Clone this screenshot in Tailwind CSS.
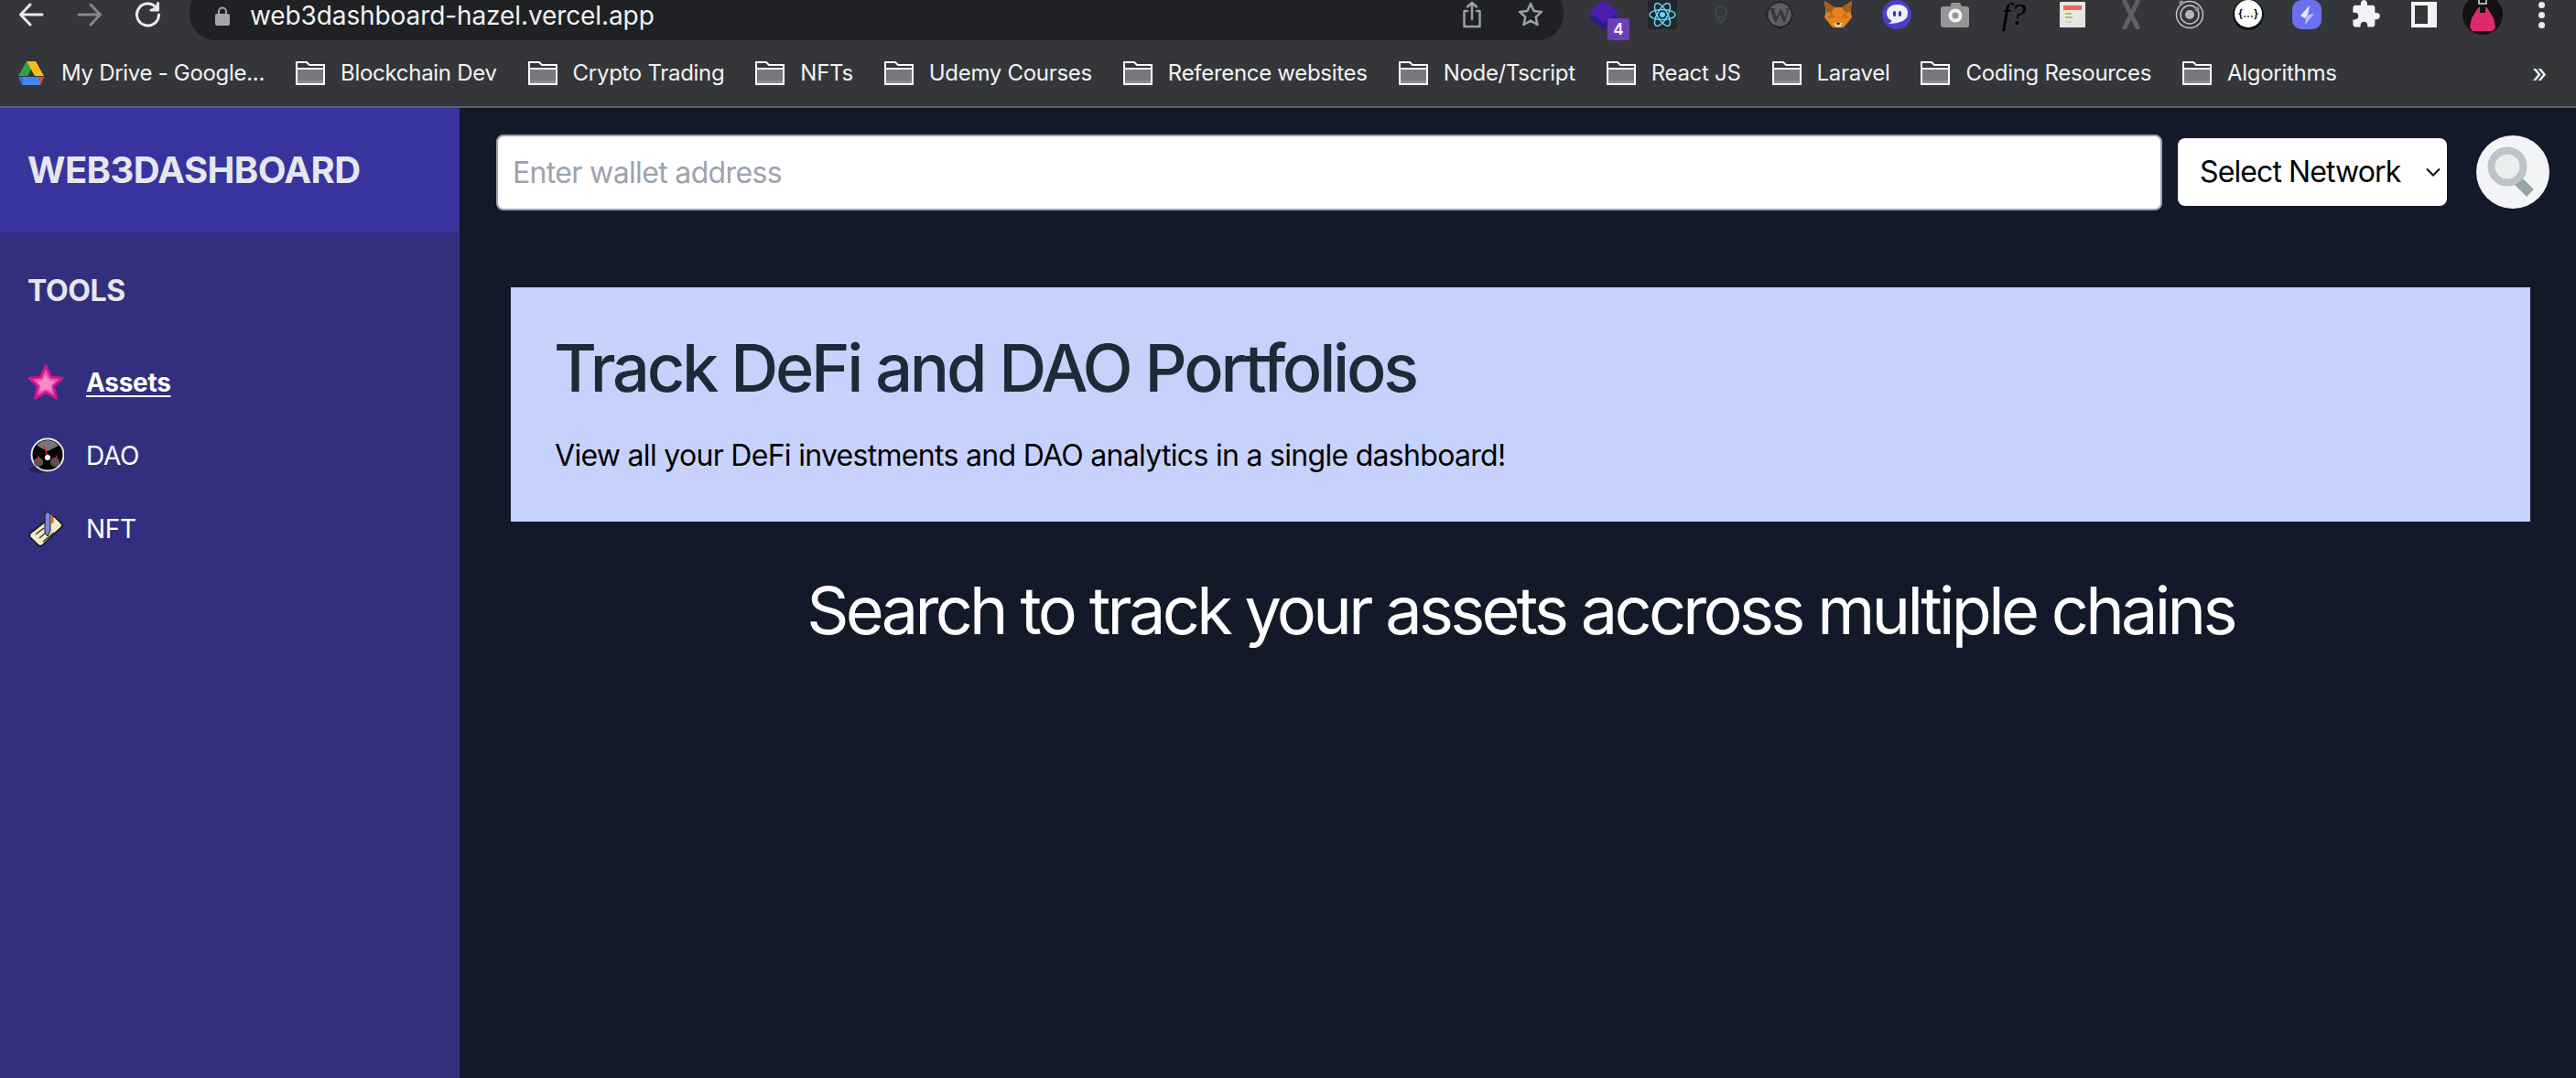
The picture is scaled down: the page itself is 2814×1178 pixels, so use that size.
<!DOCTYPE html>
<html lang="en">
<head>
<meta charset="UTF-8">
<title>Web3Dashboard</title>
<script src="https://cdn.jsdelivr.net/npm/@tailwindcss/browser@4"></script>
</head>
<body class="h-screen overflow-hidden bg-[#121a2a] font-['Inter',sans-serif]">
<div class="flex flex-col h-screen">

  <!-- browser chrome -->
  <div class="h-[118px] flex-none bg-[#35363a] border-b-2 border-[#5f6064] overflow-hidden">
    <div class="h-[44px] flex items-start pl-[2px]">
      <div class="w-[64px] h-[32px] flex items-center justify-center">
        <svg width="28" height="26" viewBox="0 0 28 26" fill="none" stroke="#e8eaed" stroke-width="3" stroke-linecap="round" stroke-linejoin="round"><path d="M26 13H3M13 2 2.500 13 13 24"/></svg>
      </div>
      <div class="w-[64px] h-[32px] flex items-center justify-center">
        <svg width="28" height="26" viewBox="0 0 28 26" fill="none" stroke="#85878a" stroke-width="3" stroke-linecap="round" stroke-linejoin="round"><path d="M2 13h23M15 2l10.500 11L15 24"/></svg>
      </div>
      <div class="w-[64px] h-[32px] flex items-center justify-center">
        <svg width="30" height="28" viewBox="0 0 30 28" fill="none" stroke="#e8eaed" stroke-width="3" stroke-linecap="round" stroke-linejoin="round"><path d="M23 5.500A12 12 0 1 0 26.500 14"/><path d="M25.500 1.500v7.500H18" fill="#e8eaed"/></svg>
      </div>
      <div class="ml-[13px] w-[1501px] h-[44px] flex-none rounded-b-[28px] rounded-tl-[5px_16px] rounded-tr-[5px_16px] bg-[#202124] flex items-start pl-[28px] pr-[22px]">
        <svg class="mt-[7px]" width="16" height="21" viewBox="0 0 16 21"><path d="M4 9V5.500a4 4 0 0 1 8 0V9" fill="none" stroke="#a3a6ab" stroke-width="2"/><rect y="8" width="16" height="13" rx="2" fill="#a3a6ab"/></svg>
        <span class="ml-[22px] text-[28px] leading-[34px] text-[#f1f3f4] tracking-[-0.1px]">web3dashboard-hazel.vercel.app</span>
        <svg class="ml-auto mt-[1px]" width="24" height="30" viewBox="0 0 24 30" fill="none" stroke="#9aa0a6" stroke-width="2.500" stroke-linecap="round" stroke-linejoin="round"><path d="M7 11H3.500v17h17V11H17M12 20V2M7 6.500 12 2l5 4.500"/></svg>
        <svg class="ml-[38px] mt-[2px]" width="28" height="28" viewBox="0 0 28 28" fill="none" stroke="#9aa0a6" stroke-width="2.500" stroke-linejoin="round"><path d="m14 2 3.600 8 8.400 .9-6.300 5.700 1.800 8.400L14 20.700 6.500 25l1.800-8.400L2 10.900l8.400-.9z"/></svg>
      </div>
      <!-- extension icons -->
      <div class="ml-[12px] flex items-start">
        <div class="w-[64px] h-[32px] flex justify-center relative">
          <svg width="32" height="32" viewBox="0 0 32 32"><path d="M16 8 32 20 16 32 0 20z" fill="#2d1a8a"/><path d="M16 0 32 13 16 25 0 13z" fill="#4a1fb0"/></svg>
          <span class="absolute left-[36px] top-[20px] w-[24px] h-[24px] rounded-[3px] bg-[#6a3fb8] text-white text-[17px] leading-[24px] font-semibold text-center">4</span>
        </div>
        <div class="w-[64px] h-[32px] flex justify-center">
          <svg width="32" height="32" viewBox="0 0 32 32"><rect width="32" height="32" rx="2" fill="#23272b"/><g fill="none" stroke="#61dafb" stroke-width="1.500"><ellipse cx="16" cy="16" rx="14" ry="5.500"/><ellipse cx="16" cy="16" rx="14" ry="5.500" transform="rotate(60 16 16)"/><ellipse cx="16" cy="16" rx="14" ry="5.500" transform="rotate(120 16 16)"/></g><circle cx="16" cy="16" r="3" fill="#61dafb"/></svg>
        </div>
        <div class="w-[64px] h-[32px] flex justify-center items-center">
          <svg width="16" height="22" viewBox="0 0 16 22" fill="none" stroke="#3f4c4b" stroke-width="1.500"><circle cx="8" cy="8" r="6"/><path d="M3 14l5 6 5-6"/></svg>
        </div>
        <div class="w-[64px] h-[32px] flex justify-center relative">
          <svg width="32" height="32" viewBox="0 0 32 32"><path d="M16 0v32M0 16h32" stroke="#1f2022" stroke-width="2"/><circle cx="16" cy="16" r="13.500" fill="#5d5e60" stroke="#1f2022" stroke-width="1.500"/></svg>
          <span class="absolute inset-0 text-center text-[24px] leading-[32px] font-bold text-[#35363a] font-['Liberation_Serif',serif]">W</span>
        </div>
        <div class="w-[64px] h-[32px] flex justify-center">
          <svg width="32" height="32" viewBox="0 0 32 32"><path d="M1 1 12 8h8L31 1l-1.500 12L31 19l-9 11H10L1 19l1.500-6z" fill="#e8821e"/><path d="M1 1 12 8 8 14 2.500 13z" fill="#a65f22"/><path d="M31 1 20 8l4 6 5.500-1z" fill="#a65f22"/><path d="M8 14 13 19 4 21zM24 14 19 19 28 21z" fill="#c86d1a"/><path d="M11 25h10l-2 5h-6z" fill="#d9c4ae"/><path d="M14 25h4l-1 2h-2z" fill="#222"/></svg>
        </div>
        <div class="w-[64px] h-[32px] flex justify-center">
          <svg width="32" height="32" viewBox="0 0 32 32"><circle cx="16" cy="16" r="16" fill="#4b3ecb"/><path d="M5 14A10 9 0 0 1 15 5h3a10 9 0 0 1 10 10c0 7-9 11-21 11 3-2 4-3 3-4-3-1-5-4-5-8z" fill="#f1eefb"/><rect x="12" y="12" width="3" height="6" rx="1.500" fill="#3b2fb0"/><rect x="18" y="12" width="3" height="6" rx="1.500" fill="#3b2fb0"/></svg>
        </div>
        <div class="w-[64px] h-[32px] flex justify-center">
          <svg width="32" height="32" viewBox="0 0 32 32"><path d="M3 7h7l2-4h9l2 4h5a3 3 0 0 1 3 3v17a3 3 0 0 1-3 3H3a3 3 0 0 1-3-3V10a3 3 0 0 1 3-3z" fill="#959698"/><circle cx="16" cy="17" r="7.500" fill="#f1f1f1"/><circle cx="16" cy="17" r="3.500" fill="#959698"/></svg>
        </div>
        <div class="w-[64px] h-[32px] flex justify-center">
          <span class="text-[34px] leading-[32px] italic text-black font-['Liberation_Serif',serif]">f?</span>
        </div>
        <div class="w-[64px] h-[32px] flex justify-center">
          <svg width="28" height="28" class="mt-[2px]" viewBox="0 0 28 28"><rect width="28" height="28" rx="1" fill="#e8e6e3"/><rect x="4" y="4" width="20" height="5" fill="#f0625c"/><rect x="6" y="12" width="7" height="2" fill="#9ed04c"/><rect x="6" y="16" width="8" height="2" fill="#9ed04c"/><rect x="6" y="21" width="7" height="2" fill="#cfcfcf"/></svg>
        </div>
        <div class="w-[64px] h-[32px] flex justify-center">
          <svg width="28" height="32" viewBox="0 0 28 32" fill="none" stroke="#5f6063" stroke-width="5"><path d="M6 0l16 32M22 0 6 32"/></svg>
        </div>
        <div class="w-[64px] h-[32px] flex justify-center">
          <svg width="32" height="32" viewBox="0 0 32 32" fill="none"><circle cx="16" cy="16" r="14.500" stroke="#c2c3c5" stroke-width="1.500"/><circle cx="16" cy="16" r="10" stroke="#c2c3c5" stroke-width="1.500"/><circle cx="16" cy="16" r="5" fill="#b4b5b7"/><circle cx="7" cy="3" r="2.500" fill="#8d8e90"/><circle cx="24" cy="10" r="2.500" fill="#8d8e90"/></svg>
        </div>
        <div class="w-[64px] h-[32px] flex justify-center">
          <div class="w-[30px] h-[30px] rounded-full bg-white shadow-[0_1px_0_2px_#111] text-black text-[12px] leading-[30px] font-semibold text-center">{...}</div>
        </div>
        <div class="w-[64px] h-[32px] flex justify-center">
          <svg width="32" height="32" viewBox="0 0 32 32"><rect width="32" height="32" rx="10" fill="#6c6ff0"/><path d="M19 6 9 17l5 3 3-4z" fill="#e9e9ff"/><path d="M18 16l6-1-10 12 1-8z" fill="#b9bcfb"/></svg>
        </div>
        <div class="w-[64px] h-[32px] flex justify-center">
          <svg width="31" height="31" viewBox="1 1 22 22" fill="#f1f3f4"><path d="M20.500 11H19V7c0-1.100-.9-2-2-2h-4V3.500C13 2.120 11.880 1 10.500 1S8 2.120 8 3.500V5H4c-1.100 0-1.990.9-1.990 2v3.800H3.500c1.490 0 2.700 1.210 2.700 2.700s-1.210 2.700-2.700 2.700H2V20c0 1.100.9 2 2 2h3.800v-1.500c0-1.490 1.210-2.700 2.700-2.700 1.490 0 2.700 1.210 2.700 2.700V22H17c1.100 0 2-.9 2-2v-4h1.500c1.380 0 2.500-1.120 2.500-2.500S21.880 11 20.500 11z"/></svg>
        </div>
        <div class="w-[64px] h-[32px] flex justify-center">
          <div class="w-[28px] h-[28px] mt-[2px] bg-[#f1f3f4] pl-[4px] pt-[4px]"><div class="w-[14px] h-[20px] bg-[#35363a]"></div></div>
        </div>
        <div class="w-[64px] h-[32px] flex justify-center">
          <svg class="mt-[-6px] flex-none" width="44" height="44" viewBox="0 0 44 44"><circle cx="22" cy="22" r="22" fill="#111"/><path d="M16 16c2-4 10-4 12 0l6 10 2 10-3 4H11l-3-4 2-10z" fill="#e0286f"/><rect x="18" y="0" width="8" height="10" fill="none" stroke="#ddd" stroke-width="1.500"/><path d="M19 12h6v8h-6z" fill="#111"/></svg>
        </div>
        <div class="w-[64px] h-[32px] flex flex-col items-center justify-center gap-[4px]">
          <span class="w-[7px] h-[7px] rounded-full bg-[#e8eaed]"></span>
          <span class="w-[7px] h-[7px] rounded-full bg-[#e8eaed]"></span>
          <span class="w-[7px] h-[7px] rounded-full bg-[#e8eaed]"></span>
        </div>
      </div>
    </div>

    <!-- bookmarks bar -->
    <div class="h-[72px] flex items-center pl-[20px] text-[24px] tracking-[-0.3px] text-[#f1f3f4] whitespace-nowrap">
      <svg width="28" height="26" viewBox="0 0 28 26"><path d="M9 0h10L10 16H0z" fill="#2ba24c"/><path d="M9 0h10l9 16H18z" fill="#f9bc15"/><path d="M5 17h23l-4 9H4z" fill="#4285f4"/><path d="M0 17h5l-1 9z" fill="#2f6fd6"/><path d="M22 17h6l-4 9z" fill="#ea4335"/></svg>
      <span class="ml-[19px] mr-[34px]">My Drive - Google...</span>
      <div class="flex items-center gap-[34px]">
        <div class="flex items-center gap-[17px]"><svg width="32" height="26" viewBox="0 0 32 26"><path d="M1 9h30v16H1z" fill="#77787b"/><path d="M1 21h30v4H1z" fill="#8b8c8e"/><path d="M1 25V1h11l3 3h16v21zM1 8h30" fill="none" stroke="#fff" stroke-width="2"/></svg><span>Blockchain Dev</span></div>
        <div class="flex items-center gap-[17px]"><svg width="32" height="26" viewBox="0 0 32 26"><path d="M1 9h30v16H1z" fill="#77787b"/><path d="M1 21h30v4H1z" fill="#8b8c8e"/><path d="M1 25V1h11l3 3h16v21zM1 8h30" fill="none" stroke="#fff" stroke-width="2"/></svg><span>Crypto Trading</span></div>
        <div class="flex items-center gap-[17px]"><svg width="32" height="26" viewBox="0 0 32 26"><path d="M1 9h30v16H1z" fill="#77787b"/><path d="M1 21h30v4H1z" fill="#8b8c8e"/><path d="M1 25V1h11l3 3h16v21zM1 8h30" fill="none" stroke="#fff" stroke-width="2"/></svg><span>NFTs</span></div>
        <div class="flex items-center gap-[17px]"><svg width="32" height="26" viewBox="0 0 32 26"><path d="M1 9h30v16H1z" fill="#77787b"/><path d="M1 21h30v4H1z" fill="#8b8c8e"/><path d="M1 25V1h11l3 3h16v21zM1 8h30" fill="none" stroke="#fff" stroke-width="2"/></svg><span>Udemy Courses</span></div>
        <div class="flex items-center gap-[17px]"><svg width="32" height="26" viewBox="0 0 32 26"><path d="M1 9h30v16H1z" fill="#77787b"/><path d="M1 21h30v4H1z" fill="#8b8c8e"/><path d="M1 25V1h11l3 3h16v21zM1 8h30" fill="none" stroke="#fff" stroke-width="2"/></svg><span>Reference websites</span></div>
        <div class="flex items-center gap-[17px]"><svg width="32" height="26" viewBox="0 0 32 26"><path d="M1 9h30v16H1z" fill="#77787b"/><path d="M1 21h30v4H1z" fill="#8b8c8e"/><path d="M1 25V1h11l3 3h16v21zM1 8h30" fill="none" stroke="#fff" stroke-width="2"/></svg><span>Node/Tscript</span></div>
        <div class="flex items-center gap-[17px]"><svg width="32" height="26" viewBox="0 0 32 26"><path d="M1 9h30v16H1z" fill="#77787b"/><path d="M1 21h30v4H1z" fill="#8b8c8e"/><path d="M1 25V1h11l3 3h16v21zM1 8h30" fill="none" stroke="#fff" stroke-width="2"/></svg><span>React JS</span></div>
        <div class="flex items-center gap-[17px]"><svg width="32" height="26" viewBox="0 0 32 26"><path d="M1 9h30v16H1z" fill="#77787b"/><path d="M1 21h30v4H1z" fill="#8b8c8e"/><path d="M1 25V1h11l3 3h16v21zM1 8h30" fill="none" stroke="#fff" stroke-width="2"/></svg><span>Laravel</span></div>
        <div class="flex items-center gap-[17px]"><svg width="32" height="26" viewBox="0 0 32 26"><path d="M1 9h30v16H1z" fill="#77787b"/><path d="M1 21h30v4H1z" fill="#8b8c8e"/><path d="M1 25V1h11l3 3h16v21zM1 8h30" fill="none" stroke="#fff" stroke-width="2"/></svg><span>Coding Resources</span></div>
        <div class="flex items-center gap-[17px]"><svg width="32" height="26" viewBox="0 0 32 26"><path d="M1 9h30v16H1z" fill="#77787b"/><path d="M1 21h30v4H1z" fill="#8b8c8e"/><path d="M1 25V1h11l3 3h16v21zM1 8h30" fill="none" stroke="#fff" stroke-width="2"/></svg><span>Algorithms</span></div>
      </div>
      <span class="ml-auto mr-[32px] text-[28px]">»</span>
    </div>
  </div>

  <div class="flex flex-1 min-h-0">
    <!-- sidebar -->
    <aside class="w-[502px] flex-none bg-[#32307e]">
      <div class="h-[136px] bg-[#38349e] flex items-center pl-[30px]">
        <span class="text-[40px] leading-[60px] font-bold tracking-[-0.6px] text-[#e5e7eb]">WEB3DASHBOARD</span>
      </div>
      <h3 class="mt-[40px] pl-[30px] text-[32px] leading-[48px] font-bold tracking-[-0.4px] text-[#e5e7eb]">TOOLS</h3>
      <nav class="mt-[36px] pl-[30px] text-[28px] tracking-[-0.3px] text-white">
        <a href="#" class="h-[80px] flex items-center gap-[24px] font-bold underline underline-offset-[4px]">
          <svg width="40" height="40" viewBox="0 0 40 40"><path d="M20 2 25.500 14 38 15.500 28.500 24 31.500 37 20 30.500 8.500 37 11.500 24 2 15.500 14.500 14z" fill="#ea5bb4" stroke="#d3158a" stroke-width="3" stroke-linejoin="round"/><path d="M20 11 23.500 18 29.500 19 25.500 24 26.500 30 20 27 13.500 30 14.500 24 10.500 19 16.500 18z" fill="#f78ccb"/></svg>
          Assets
        </a>
        <a href="#" class="h-[80px] flex items-center gap-[24px]">
          <svg width="40" height="40" viewBox="0 0 40 40"><ellipse cx="15" cy="35" rx="13" ry="4" fill="#232160"/><circle cx="22" cy="19" r="17.500" fill="#050505" stroke="#e8e8e8" stroke-width="2"/><path d="M10 9a15 15 0 0 1 24 0l-12 6z" fill="#777"/><circle cx="12" cy="27" r="5" fill="#555"/><circle cx="30" cy="27" r="5" fill="#555"/><path d="M22 21 18 9M12 27l0-7M30 27l2-7" stroke="#e32020" stroke-width="1.500"/><circle cx="22" cy="22" r="3" fill="#fff"/></svg>
          DAO
        </a>
        <a href="#" class="h-[80px] flex items-center gap-[24px]">
          <svg width="40" height="40" viewBox="0 0 40 40"><path d="M3 25 26 7q2-1 4 0l7 7q2 2 0 4L16 38q-2 1-4 0l-9-9q-1-2 0-4z" fill="#f3ebc8" stroke="#111" stroke-width="1.500" stroke-linejoin="round"/><path d="M9 26l9-7M13 30l10-8M17 34l12-10" stroke="#333" stroke-width="1.500"/><path d="M19 24V4q3-5 6 0v18l-3 6z" fill="#7f83e0" stroke="#111" stroke-width="1"/><path d="M25 4q4 2 4 8l-4 4z" fill="#b5822c"/></svg>
          NFT
        </a>
      </nav>
    </aside>

    <!-- main -->
    <main class="flex-1 min-w-0">
      <div class="h-[140px] flex items-center pl-[40px]">
        <input type="text" placeholder="Enter wallet address" class="w-[1820px] h-[83px] bg-white rounded-[8px] border-2 border-[#9ca3af] px-[16px] text-[32px] tracking-[-0.65px] placeholder:text-[#9ca3af] outline-none">
        <div class="ml-[17px] w-[294px] h-[74px] bg-white rounded-[8px] flex items-center pl-[24px] text-[32px] tracking-[-0.9px] text-black whitespace-nowrap">
          Select Network
          <svg class="ml-auto mr-[7px]" width="16" height="10" viewBox="0 0 16 10" fill="none" stroke="#111" stroke-width="2"><path d="M1 1.500 8 8.500l7-7"/></svg>
        </div>
        <button class="ml-[32px] w-[80px] h-[80px] rounded-full bg-[#f3f4f6] flex items-center justify-center">
          <svg width="60" height="60" viewBox="0 0 60 60"><path d="M33 37 49 53" stroke="#95a5a6" stroke-width="11"/><path d="M32 34 38 40" stroke="#7f8c8d" stroke-width="11"/><circle cx="24" cy="24" r="17.500" fill="#e9eeee" stroke="#bdc3c7" stroke-width="8"/></svg>
        </button>
      </div>
      <div class="ml-[56px] mr-[50px] mt-[56px]">
        <section class="h-[256px] bg-[#c7d2fc] py-[48px] px-[48px]">
          <h1 class="-ml-[1px] text-[72px] leading-[80px] font-[550] tracking-[-3.2px] text-[#1f2937]">Track DeFi and DAO Portfolios</h1>
          <p class="mt-[32px] text-[32px] leading-[48px] tracking-[-0.7px] text-black">View all your DeFi investments and DAO analytics in a single dashboard!</p>
        </section>
        <h2 class="mt-[57px] text-center text-[72px] leading-[80px] tracking-[-3.7px] text-white">Search to track your assets accross multiple chains</h2>
      </div>
    </main>
  </div>
</div>
</body>
</html>
